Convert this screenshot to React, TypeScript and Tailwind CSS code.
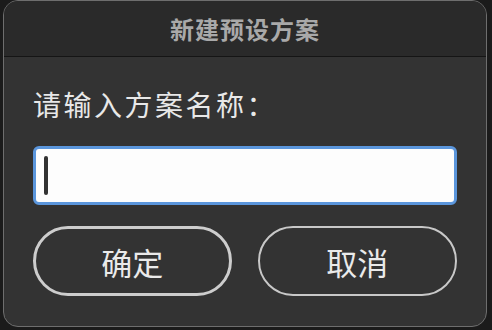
export default function App() {
  return (
    <div
      className="w-[492px] h-[330px] bg-[#1b1b1b] pl-[3px] pr-[5px] pb-[3px]"
      style={{ fontFamily: '"Noto Sans CJK SC", "Noto Sans", sans-serif' }}
    >
      <div className="h-[327px] rounded-[15px] border border-[#6e6e6e] bg-[#333333] overflow-hidden flex flex-col">
        <div className="h-[56px] shrink-0 bg-[#2a2a2a] border-b border-[#151515] flex items-center justify-center">
          <span className="text-[24px] font-bold text-[#a9a9a9] leading-none tracking-[1px]">
            新建预设方案
          </span>
        </div>
        <div className="flex flex-col px-[29px] pt-[33px]">
          <p className="text-[28px] text-[#e8e8e8] leading-none tracking-[2.5px]">请输入方案名称：</p>
          <div className="mt-[28px] h-[59px] rounded-[6px] border-[3px] border-[#5b96dc] bg-[#fdfdfd] flex items-center pl-[8px]">
            <div className="w-[4px] h-[39px] rounded-full bg-[#333333]" />
          </div>
          <div className="mt-[21px] flex gap-[26px]">
            <button className="w-[199px] h-[70px] rounded-full border-[3px] border-[#cdcdcd] text-[31px] text-[#eaeaea] leading-none">
              确定
            </button>
            <button className="w-[200px] h-[70px] rounded-full border-[2px] border-[#c8c8c8] text-[31px] text-[#eaeaea] leading-none">
              取消
            </button>
          </div>
        </div>
      </div>
    </div>
  );
}
